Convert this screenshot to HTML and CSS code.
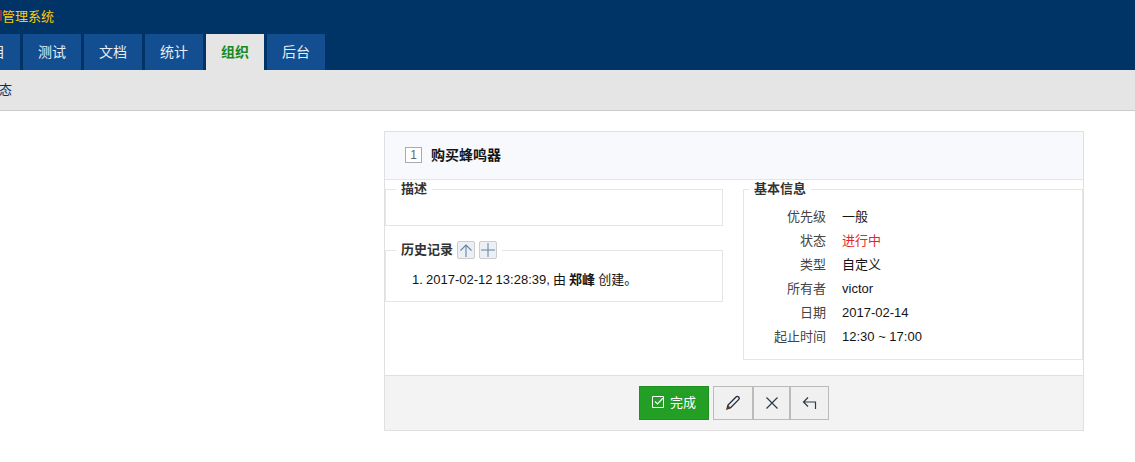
FILE: index.html
```html
<!DOCTYPE html>
<html lang="zh-CN">
<head>
<meta charset="utf-8">
<title>管理系统</title>
<link rel="stylesheet" href="styles.css">
</head>
<body>
<header class="top">
  <div class="brand"><span class="brand-cut"></span>管理系统</div>
  <nav class="tabs">
    <a class="tab tab-cut">项目</a>
    <a class="tab">测试</a>
    <a class="tab">文档</a>
    <a class="tab">统计</a>
    <a class="tab active">组织</a>
    <a class="tab">后台</a>
  </nav>
</header>
<div class="subnav"><span class="subnav-item">动态</span></div>
<main class="main">
  <section class="card">
    <div class="card-head">
      <span class="id-box">1</span>
      <strong class="title">购买蜂鸣器</strong>
    </div>
    <div class="card-body">
      <div class="col-left">
        <fieldset class="box box-desc">
          <legend>描述</legend>
        </fieldset>
        <fieldset class="box box-history">
          <legend class="history-legend"><span>历史记录</span>
            <span class="mini-btn"><svg width="14" height="14" viewBox="0 0 14 14"><path d="M7 14V2M1.500 7.500L7 2l5.500 5.500" fill="none" stroke="#5f84a8" stroke-width="1.100"/></svg></span>
            <span class="mini-btn"><svg width="14" height="14" viewBox="0 0 14 14"><path d="M7 0v14M0 7h14" fill="none" stroke="#5f84a8" stroke-width="1"/></svg></span>
          </legend>
          <ol class="history">
            <li>2017-02-12 13:28:39, 由 <strong>郑峰</strong> 创建。</li>
          </ol>
        </fieldset>
      </div>
      <div class="col-right">
        <fieldset class="box box-info">
          <legend>基本信息</legend>
          <dl class="info">
            <dt>优先级</dt><dd>一般</dd>
            <dt>状态</dt><dd class="status">进行中</dd>
            <dt>类型</dt><dd>自定义</dd>
            <dt>所有者</dt><dd>victor</dd>
            <dt>日期</dt><dd>2017-02-14</dd>
            <dt>起止时间</dt><dd>12:30 ~ 17:00</dd>
          </dl>
        </fieldset>
      </div>
    </div>
    <div class="card-foot">
      <button class="btn btn-done"><svg width="13" height="13" viewBox="0 0 13 13"><path d="M.5 1.500h11v11H.5z" fill="none" stroke="#fff"/><path d="M3 6.500l2.500 2.500L11 3" fill="none" stroke="#fff" stroke-width="1.200"/></svg>完成</button>
      <div class="btn-group">
        <button class="btn btn-edit"><svg width="16" height="16" viewBox="0 0 16 16"><path d="M2 14l1-4 8-8c1-1 2-.6 2.600 0s1 1.600 0 2.600l-8 8z" fill="none" stroke="#1d2a3a" stroke-width="1.300"/><path d="M2 14l1-4 3 3z" fill="#7a3b12"/></svg></button>
        <button class="btn btn-close"><svg width="14" height="14" viewBox="0 0 14 14"><path d="M1.500 1.500l11 11M12.500 1.500l-11 11" fill="none" stroke="#2c3a4a" stroke-width="1.200"/></svg></button>
        <button class="btn btn-back"><svg width="15" height="14" viewBox="0 0 15 14"><path d="M6 1.500L1.500 6 6 10.500M1.500 6h12V13" fill="none" stroke="#2c3a4a" stroke-width="1.200"/></svg></button>
      </div>
    </div>
  </section>
</main>
</body>
</html>
```
FILE: styles.css
```css
* { box-sizing: border-box; }
html, body { margin: 0; padding: 0; overflow: hidden; }
body {
  width: 1135px;
  height: 462px;
  background: #fff;
  color: #141414;
  font-family: "Liberation Sans", "Noto Sans CJK SC", sans-serif;
  font-size: 13px;
}
.top {
  height: 70px;
  background: #036;
  overflow: hidden;
}
.brand {
  display: flex;
  align-items: center;
  height: 34px;
  padding-bottom: 4px;
  color: #fc0;
  font-size: 13px;
}
.brand-cut {
  width: 2px;
  height: 11px;
  background: #8a2b4a;
}
.tabs {
  display: flex;
  gap: 3px;
  margin-left: -38px;
}
.tab {
  width: 58px;
  height: 36px;
  line-height: 36px;
  text-align: center;
  font-size: 14px;
  color: #e8edf3;
  background: #134e90;
}
.tab.active {
  background: #e5e5e5;
  color: #1a8a1a;
  font-weight: bold;
}
.subnav {
  height: 41px;
  line-height: 39px;
  background: #e5e5e5;
  border-bottom: 1px solid #ccc;
  color: #036;
  overflow: hidden;
}
.subnav-item { display: block; margin-left: -14px; }
.main {
  display: flex;
  justify-content: flex-end;
  padding: 20px 51px 0 0;
}
.card {
  width: 700px;
  height: 300px;
  border: 1px solid #e0e0e0;
  display: flex;
  flex-direction: column;
}
.card-head {
  height: 48px;
  flex: none;
  display: flex;
  align-items: center;
  padding: 0 0 2px 20px;
  background: #f8f9fd;
  border-bottom: 1px solid #e5e5e5;
}
.id-box {
  width: 17px;
  height: 16px;
  line-height: 14px;
  margin-right: 9px;
  border: 1px solid #aaa;
  background: #fff;
  color: #666;
  text-align: center;
  font-size: 12px;
}
.title { font-size: 14px; margin-top: -2px; }
.card-body {
  flex: 1;
  display: flex;
  justify-content: space-between;
}
.col-left { width: 338px; }
.col-right { width: 340px; }
.box {
  margin: 0;
  padding: 0;
  min-width: 0;
  border: 1px solid #e5e5e5;
}
.box legend {
  margin-left: 10px;
  padding: 0 5px;
  font-weight: bold;
  line-height: 18px;
  color: #333;
}
.box .history-legend {
  display: flex;
  gap: 4px;
}
.box-desc { height: 46px; }
.box-history { height: 61px; margin-top: 15px; }
.box-info { height: 180px; }
.box-info legend { margin-left: 5px; }
.mini-btn {
  display: flex;
  align-items: center;
  justify-content: center;
  width: 18px;
  height: 18px;
  background: #eceff3;
  border: 1px solid #ccc;
  border-radius: 2px;
}
.history {
  margin: 0;
  padding: 12px 0 0 40px;
  line-height: 18px;
  word-spacing: -0.5px;
}
.info {
  display: grid;
  grid-template-columns: 82px 1fr;
  grid-auto-rows: 24px;
  column-gap: 16px;
  margin: 7px 0 0;
  line-height: 24px;
}
.info dt { text-align: right; color: #444; }
.info dd { margin: 0; }
.status { color: #e4262c; }
.card-foot {
  flex: none;
  height: 55px;
  display: flex;
  justify-content: center;
  align-items: center;
  gap: 4px;
  background: #f3f3f3;
  border-top: 1px solid #e0e0e0;
}
.btn {
  display: inline-flex;
  align-items: center;
  justify-content: center;
  height: 34px;
  padding: 0;
  font: inherit;
  border: 1px solid #bbb;
  background: #f0f0f0;
}
.btn-done {
  width: 70px;
  gap: 5px;
  padding: 0 0 4px;
  color: #fff;
  background: #229f24;
  border-color: #1f8f21;
}
.btn-group { display: flex; }
.btn-edit { width: 40px; }
.btn-close { width: 37px; }
.btn-back { width: 39px; }
```
